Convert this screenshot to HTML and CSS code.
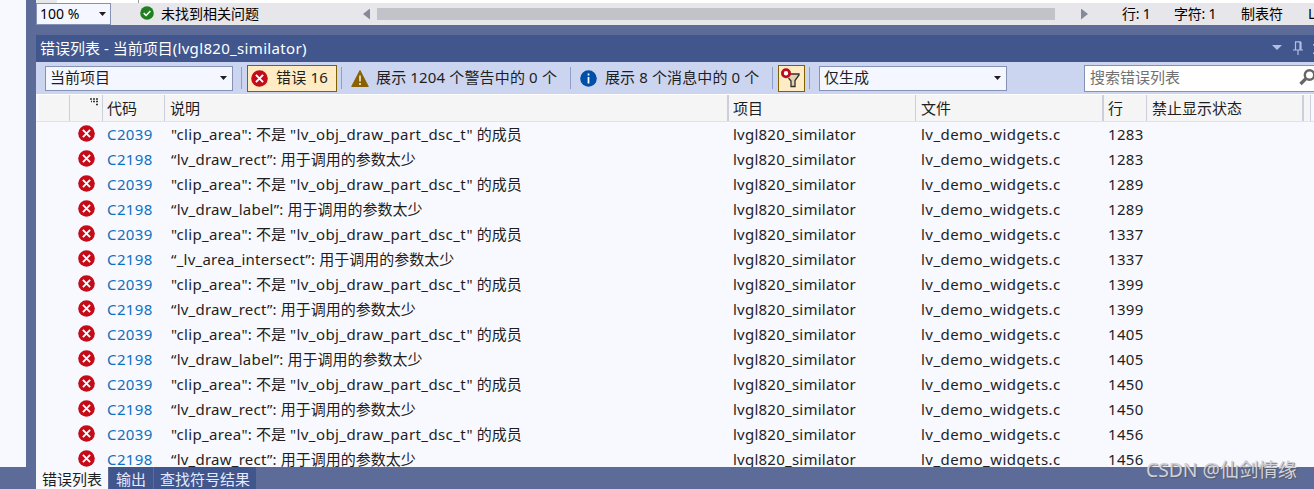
FILE: index.html
```
<!DOCTYPE html>
<html lang="zh-CN">
<head>
<meta charset="utf-8">
<title>错误列表</title>
<link rel="stylesheet" href="styles.css">
</head>
<body>
<svg class="defs" width="0" height="0" aria-hidden="true">
  <symbol id="error" viewBox="0 0 17 17"><circle cx="8.5" cy="8.5" r="8.3" fill="#c50b17"/><path d="M4.9 4.9l7.2 7.2M12.1 4.9l-7.2 7.2" stroke="#fff" stroke-width="1.9"/></symbol>
</svg>
<div class="app">
  <div class="side"></div>
  <div class="main">
    <div class="editor"><i class="margin"></i><i class="guide"></i></div>
    <div class="status">
      <div class="zoom"><span>100 %</span><i class="caret"></i></div>
      <svg class="ok" width="14" height="14" viewBox="0 0 14 14"><circle cx="7" cy="7" r="6.8" fill="#1f801f"/><path d="M3.7 7.1l2.4 2.4 4.3-4.5" fill="none" stroke="#fff" stroke-width="1.5"/></svg>
      <span class="health">未找到相关问题</span>
      <i class="arrow-left"></i><i class="thumb"></i><i class="arrow-right"></i>
      <span class="st-line">行: 1</span><span class="st-char">字符: 1</span><span class="st-tab">制表符</span><span class="st-eol">LF</span>
    </div>
    <div class="title"><span class="caption">错误列表 - 当前项目<span class="cap-latin">(lvgl820_similator)</span></span>
      <i class="menu"></i>
      <svg class="pin" width="10" height="15" viewBox="0 0 10 15"><path d="M2 .8h6M2.5 1v7.5M7 1v7.5M8 1v7.5M0 9h10M5 9v5" fill="none" stroke="#b3bfe2" stroke-width="1.2"/></svg>
      <svg class="close" width="10" height="10" viewBox="0 0 10 10"><path d="M0 0l10 10M10 0L0 10" stroke="#b3bfe2" stroke-width="1.5"/></svg>
    </div>
    <div class="toolbar">
      <div class="combo project"><span>当前项目</span><i class="caret"></i></div>
      <i class="sep s1"></i>
      <div class="toggle errors"><svg width="17" height="17"><use href="#error"/></svg><span>错误 16</span></div>
      <i class="sep s2"></i>
      <svg class="warn" width="18" height="17" viewBox="0 0 18 17"><path d="M9 .5L17.3 16.5H.7z" fill="#8a6100" stroke="#8a6100" stroke-linejoin="round"/><path d="M9 5.5v6M9 13v2" stroke="#fff" stroke-width="1.4"/></svg>
      <span class="warn-text">展示 1204 个警告中的 0 个</span>
      <i class="sep s3"></i>
      <svg class="info" width="17" height="17" viewBox="0 0 17 17"><circle cx="8.5" cy="8.5" r="8.3" fill="#0050a8"/><path d="M8.5 3.5v2M8.5 7v6.5" stroke="#fff" stroke-width="1.7"/></svg>
      <span class="info-text">展示 8 个消息中的 0 个</span>
      <i class="sep s4"></i>
      <div class="toggle filter"><svg width="25" height="25" viewBox="0 0 25 25"><path d="M10.5 8H20v1l-4 5.5v6h-4V15L9.5 12" fill="#e1d1ae" stroke="#303030" stroke-width="1.3"/><circle cx="7" cy="7.2" r="3.6" fill="#fff" stroke="#bd0b1b" stroke-width="2.8"/></svg></div>
      <i class="sep s5"></i>
      <div class="combo build"><span>仅生成</span><i class="caret"></i></div>
      <div class="search"><span>搜索错误列表</span><svg width="17" height="18" viewBox="0 0 17 18"><circle cx="10.5" cy="6" r="4.7" fill="none" stroke="#666" stroke-width="2.4"/><path d="M7 9.5L1.5 15" stroke="#666" stroke-width="3.2"/></svg></div>
    </div>
    <div class="list">
      <div class="grid head">
        <span></span>
        <span class="icon-col"><svg width="8" height="8" viewBox="0 0 8 8"><path d="M0 1h2M3 1h2M6 1h2M1 3.5h1M3 3.5h2M6 3.5h2M6 6.5h2" stroke="#333" stroke-width="1.5"/></svg></span>
        <span>代码</span><span>说明</span><span>项目</span><span>文件</span><span>行</span><span>禁止显示状态</span><span></span>
      </div>
      <div id="rows"></div>
    </div>
    <div class="tabs"><span class="tab active">错误列表</span><span class="tab">输出</span><span class="tab symbols">查找符号结果</span></div>
  </div>
  <div class="watermark">CSDN @仙剑情缘</div>
</div>
<script src="rows.js"></script>
</body>
</html>
```
FILE: rows.js
```
const clip = '<span class="c1">"clip_area":</span> 不是 <span class="c2">"lv_obj_draw_part_dsc_t"</span> 的成员';
const args = name => `<span class="fn">“${name}”:</span> 用于调用的参数太少`;
const errors = [
  ['C2039', clip, 1283], ['C2198', args('lv_draw_rect'), 1283],
  ['C2039', clip, 1289], ['C2198', args('lv_draw_label'), 1289],
  ['C2039', clip, 1337], ['C2198', args('_lv_area_intersect'), 1337],
  ['C2039', clip, 1399], ['C2198', args('lv_draw_rect'), 1399],
  ['C2039', clip, 1405], ['C2198', args('lv_draw_label'), 1405],
  ['C2039', clip, 1450], ['C2198', args('lv_draw_rect'), 1450],
  ['C2039', clip, 1456], ['C2198', args('lv_draw_rect'), 1456],
];
document.getElementById('rows').innerHTML = errors.map(([code, text, line]) => `
  <div class="grid row"><span></span><span class="icon-col"><svg width="17" height="17"><use href="#error"/></svg></span>
  <span class="code">${code}</span><span>${text}</span><span class="proj">lvgl820_similator</span>
  <span class="file">lv_demo_widgets.c</span><span class="line">${line}</span><span></span><span></span></div>`).join('');
```
FILE: styles.css
```
* { box-sizing: border-box; }
body { margin: 0; }
svg { display: block; flex: none; }
.defs { position: absolute; }
i { display: block; flex: none; }
.app {
  position: relative; display: flex; width: 1314px; height: 489px; overflow: hidden;
  background: #5d6b99; color: #1e1e1e;
  font: 15px/20px "Noto Sans", "Noto Sans CJK SC", sans-serif; white-space: nowrap;
}
.side { width: 26px; height: 467px; background: #f8f9ff; }
.main { width: 1278px; margin-left: 10px; display: flex; flex-direction: column; }
.editor { height: 3px; background: #fff; display: flex; }
.margin { width: 21px; background: #e6e7e8; }
.guide { width: 1px; margin-left: 81px; background: #999; }
.status { height: 22px; background: #e6e6eb; display: flex; align-items: center; font-size: 14px; color: #000; margin-bottom: 10px; }
.status > * { flex: none; }
.zoom { width: 75px; height: 22px; border: 1px solid #8591b5; background: #f4f7ff; display: flex; align-items: center; justify-content: space-between; padding: 0 4px 0 3px; }
.caret { width: 7px; height: 4px; background: #1e1e1e; clip-path: polygon(0 0, 100% 0, 50% 100%); }
.ok { margin: -2px 7px 0 29px; }
.health { width: 201px; }
.arrow-left, .arrow-right { width: 7px; height: 11px; background: #868999; }
.arrow-left { clip-path: polygon(100% 0, 100% 100%, 0 50%); margin-left: 1px; }
.arrow-right { clip-path: polygon(0 0, 100% 50%, 0 100%); margin-left: 26px; }
.thumb { width: 678px; height: 12px; margin-left: 7px; background: #c2c3c9; }
.st-line { width: 52px; margin-left: 34px; letter-spacing: -.2px; }
.st-char { width: 67px; letter-spacing: -.2px; }
.st-tab { width: 67px; }
.title { height: 27px; background: #40568d; color: #fff; display: flex; align-items: center; padding-left: 4px; overflow: hidden; }
.title > * { flex: none; }
.caption { width: 1232px; padding-bottom: 2px; }
.cap-latin { letter-spacing: .33px; }
.menu { width: 10px; height: 5px; margin-top: -2px; background: #b3bfe2; clip-path: polygon(0 0, 100% 0, 50% 100%); }
.pin { margin: -1px 0 0 11px; }
.close { margin-left: 10px; }
.toolbar { height: 32px; background: #ccd5f0; display: flex; align-items: center; padding-left: 9px; }
.toolbar > * { flex: none; }
.toolbar span { padding-bottom: 2px; }
.combo { height: 25px; border: 1px solid #8591b5; background: #f4f7ff; display: flex; align-items: center; justify-content: space-between; padding: 0 5px 0 4px; }
.project { width: 188px; }
.sep { width: 1px; height: 22px; background: #8f9fca; }
.s1 { margin: 0 5px 0 8px; }
.toggle { height: 27px; border: 1px solid #806000; background: #ffecc4; display: flex; align-items: center; }
.errors { width: 90px; padding-left: 3px; gap: 8px; }
.errors span { letter-spacing: .2px; }
.s2 { margin: 0 9px 0 4px; }
.warn-text { width: 187px; margin-left: 7px; letter-spacing: .15px; }
.s3 { margin: 0 9px 0 7px; }
.info-text { width: 158px; margin-left: 8px; letter-spacing: .12px; }
.s4 { margin: 0 5px 0 9px; }
.filter { width: 27px; }
.s5 { margin: 0 9px 0 4px; }
.build { width: 188px; }
.search { width: 240px; height: 27px; margin-left: 77px; border: 1px solid #8591b5; background: #fff; color: #717171; display: flex; align-items: center; padding-left: 5px; }
.search span { width: 209px; }
.list { height: 373px; overflow: hidden; background: #f8f9ff; }
.grid { display: grid; grid-template-columns: 31px 33px 62px 564px 187px 188px 43px 157px 7px; padding-left: 3px; }
.head { height: 28px; border-top: 1px solid #fff; border-bottom: 1px solid #e0e3ee; background: linear-gradient(90deg, #f8f9ff 3px, #f5f5f5 3px 1275px, #f8f9ff 1275px); }
.head > span { padding: 3px 0 0 4px; border-right: 1px solid #cccedb; }
.head > span:nth-child(4) { padding-left: 5px; }
.head > span:nth-child(6), .head > span:nth-child(8) { padding-left: 5px; }
.head > span:nth-child(4), .head > span:nth-child(6), .head > span:nth-child(8) { border-right-width: 2px; }
.head .icon-col { padding: 3px 0 0 20px; }
.row { height: 25px; }
.row > span { padding: 2px 0 0 4px; }
.row > span:nth-child(4) { padding-left: 6px; }
.row > .icon-col { padding: 3px 0 0 8px; }
.code { color: #0e70c0; letter-spacing: .4px; }
.c1 { letter-spacing: .33px; }
.c2 { letter-spacing: .41px; }
.fn { letter-spacing: .24px; }
.proj { letter-spacing: .24px; }
.row > .file { letter-spacing: .45px; padding-left: 5px; }
.line { letter-spacing: .3px; }
.tabs { height: 22px; display: flex; color: #e3eaff; }
.tab { height: 22px; width: 44px; padding: 2px 0 0 7px; margin-right: 1px; background: #40568d; }
.active { width: 72px; padding-left: 6px; background: #f8f9ff; color: #1e1e1e; }
.symbols { width: 102px; padding-left: 6px; }
.watermark { position: absolute; left: 1146px; top: 457px; font-size: 19.3px; line-height: 26px; color: #d0d2da; text-shadow: 1px 1px 1px #555c; }
```
